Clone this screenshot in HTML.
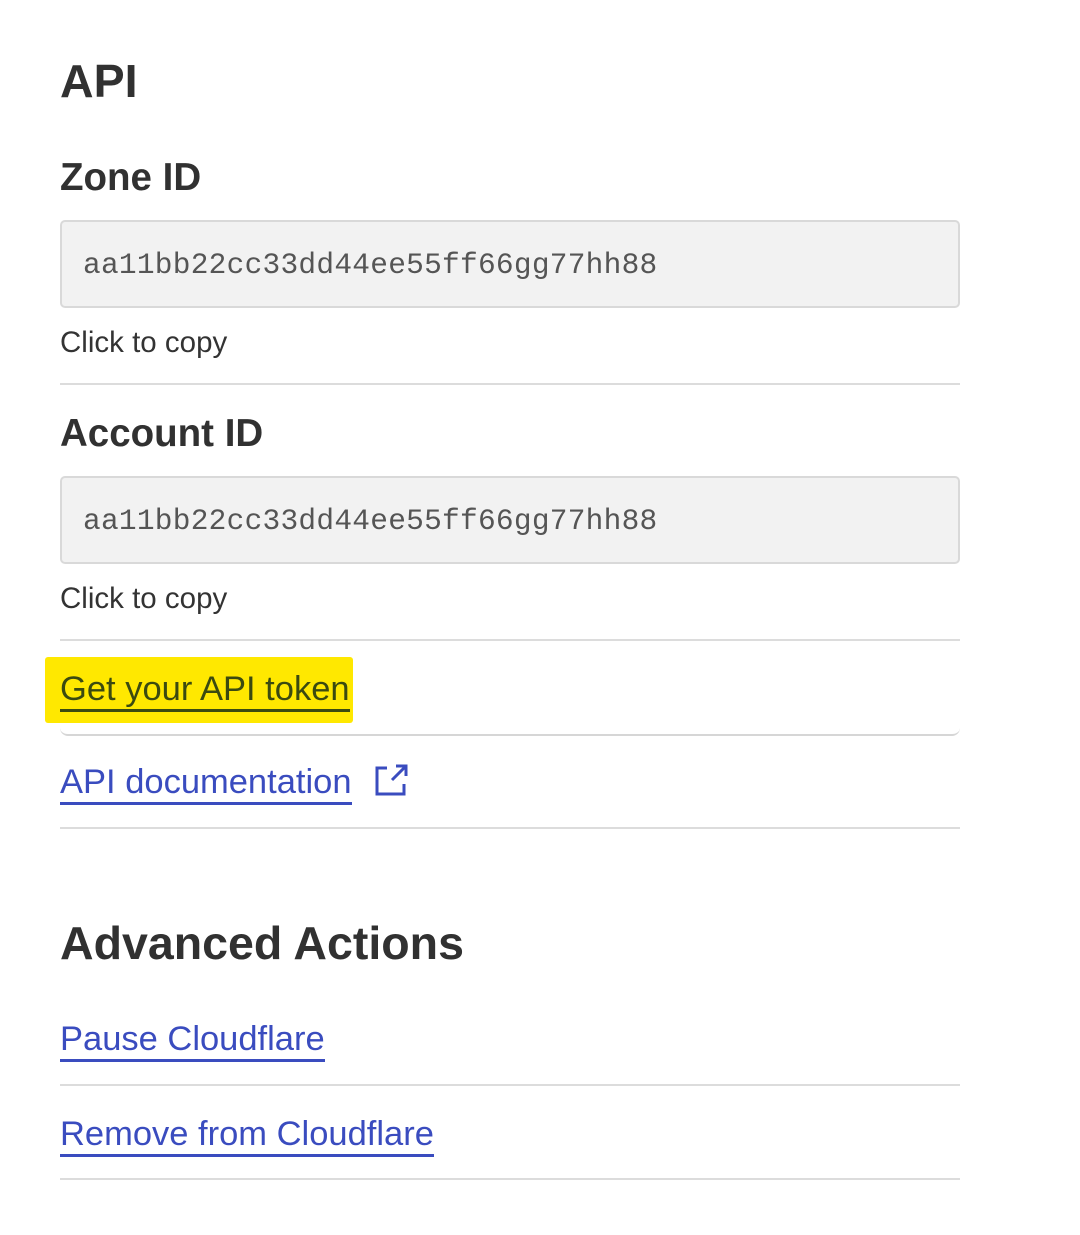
<!DOCTYPE html>
<html><head><meta charset="utf-8"><style>
body{margin:0;width:1080px;height:1235px;background:#fff;position:relative;font-family:"Liberation Sans",sans-serif;color:#313131;overflow:hidden}
.a{position:absolute;white-space:nowrap}
h1{margin:0;font-size:46.5px;font-weight:bold;position:absolute;left:60px;line-height:1;white-space:nowrap}
h2{margin:0;font-size:38.5px;font-weight:bold;position:absolute;left:60px;line-height:1;white-space:nowrap}
.box{position:absolute;left:60px;width:900px;height:88px;background:#f2f2f2;border:2px solid #d9d9d9;border-radius:5px;box-sizing:border-box}
.mono{position:absolute;left:21px;top:26px;font-family:"Liberation Mono",monospace;font-size:29.5px;color:#555;letter-spacing:0.25px}
.cp{position:absolute;left:60px;font-size:29.5px;line-height:1;color:#333;white-space:nowrap}
.sep{position:absolute;left:60px;width:900px;height:2px;background:#dcdcdc}
.lk{position:absolute;left:60px;font-size:34.5px;line-height:1;color:#3a4cbf;border-bottom:3px solid #3a4cbf;padding-bottom:2px;white-space:nowrap}
</style></head><body>
<h1 style="top:58px">API</h1>
<h2 style="top:159px">Zone ID</h2>
<div class="box" style="top:220px"><div class="mono">aa11bb22cc33dd44ee55ff66gg77hh88</div></div>
<div class="cp" style="top:328px">Click to copy</div>
<div class="sep" style="top:383px"></div>
<h2 style="top:415px">Account ID</h2>
<div class="box" style="top:476px"><div class="mono">aa11bb22cc33dd44ee55ff66gg77hh88</div></div>
<div class="cp" style="top:584px">Click to copy</div>
<div class="sep" style="top:639px"></div>
<div class="a" style="left:60px;top:690px;width:900px;height:44px;border-bottom:2px solid #d6d6d6;border-radius:0 0 8px 8px"></div>
<div class="a" style="left:45px;top:657px;width:308px;height:66px;background:#ffe800;border-radius:3px"></div>
<div class="lk" style="top:672px;color:#3b4a10;border-color:#3b4a10">Get your API token</div>
<div class="lk" style="top:765px">API documentation</div>
<svg class="a" style="left:374px;top:763px" width="36" height="34" viewBox="0 0 36 34"><path d="M13 5H3v26h27V21" fill="none" stroke="#3a4cbf" stroke-width="3"/><path d="M18 17L32 3M22 3h10v10" fill="none" stroke="#3a4cbf" stroke-width="3"/></svg>
<div class="sep" style="top:827px"></div>
<h1 style="top:920px">Advanced Actions</h1>
<div class="lk" style="top:1022px">Pause Cloudflare</div>
<div class="sep" style="top:1084px"></div>
<div class="lk" style="top:1117px">Remove from Cloudflare</div>
<div class="sep" style="top:1178px"></div>
</body></html>
